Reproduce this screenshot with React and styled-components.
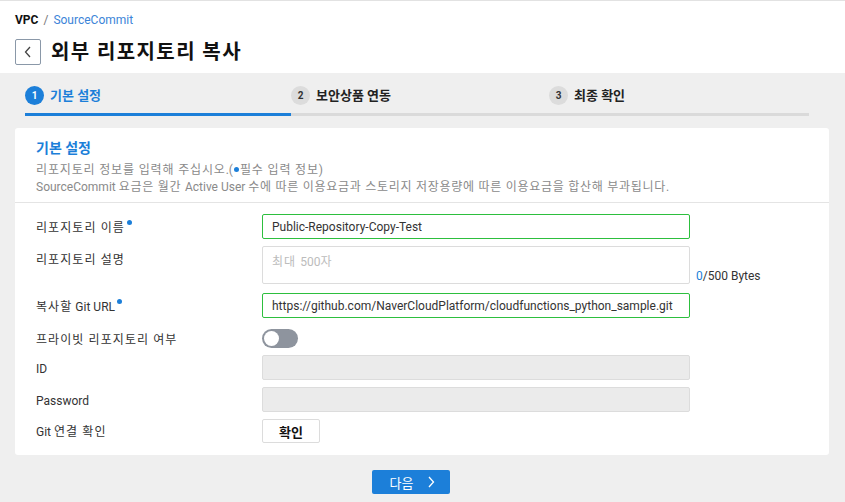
import React from 'react'
import styled, { createGlobalStyle } from 'styled-components'

const GlobalStyle = createGlobalStyle`
  html, body { margin: 0; padding: 0; background: #efefef; }
  body { font-family: Roboto, "Noto Sans CJK KR", sans-serif; color: #222; }
  * { box-sizing: border-box; }
`

const BLUE = '#1c7fd9'
const GREEN = '#2dbf3e'

// Hangul runs render a bit wider in the original font
const Hangul = styled.span`
  letter-spacing: ${({ $ls }) => $ls || '0.07em'};
`

const ko = (text, ls) =>
  text.split(/([\uAC00-\uD7A3][\uAC00-\uD7A3 ]*)/).map((part, i) =>
    /[\uAC00-\uD7A3]/.test(part) ? <Hangul key={i} $ls={ls}>{part}</Hangul> : part
  )

// Header
const Header = styled.header`
  background: #fff;
  border-top: 1px solid #e2e2e2;
  padding: 11px 15px 8px;
`

const Crumbs = styled.div`
  font-size: 12px;
  line-height: 16px;
  display: flex;
  gap: 5px;
`

const CrumbRoot = styled.span`
  font-weight: bold;
  color: #111;
`

const CrumbSep = styled.span`
  color: #777;
`

const CrumbLink = styled.span`
  color: #3c84d8;
`

const TitleRow = styled.div`
  margin-top: 11px;
  display: flex;
  align-items: center;
  gap: 10px;
`

const BackButton = styled.button`
  width: 26px;
  height: 26px;
  padding: 0;
  border: 1px solid #8a98a8;
  border-radius: 2px;
  background: #fff;
  display: flex;
  align-items: center;
  justify-content: center;
`

const Title = styled.h1`
  margin: 0;
  font-size: 20px;
  font-weight: bold;
  color: #111;
  line-height: 26px;
`

// Steps
const Steps = styled.nav`
  display: flex;
  padding: 13px 36px 0 25px;
`

const Step = styled.div`
  flex: ${({ $w }) => ($w ? `0 0 ${$w}px` : '1')};
  display: flex;
  align-items: center;
  gap: 6px;
  padding-bottom: 8px;
  border-bottom: 3px solid ${({ $active }) => ($active ? BLUE : '#dadada')};
  font-size: 13px;
  font-weight: bold;
  line-height: 18px;
  color: ${({ $active }) => ($active ? BLUE : '#222')};
`

const StepNum = styled.span`
  width: 19px;
  height: 19px;
  border-radius: 50%;
  background: ${({ $active }) => ($active ? BLUE : '#dcdcdc')};
  color: ${({ $active }) => ($active ? '#fff' : '#333')};
  font-size: 10px;
  font-weight: bold;
  display: flex;
  align-items: center;
  justify-content: center;
`

// Card
const Card = styled.section`
  margin: 12px 16px 0 15px;
  background: #fff;
  border-radius: 3px;
  padding-bottom: 12px;
`

const CardHead = styled.div`
  padding: 10px 21px 6px;
  border-bottom: 1px solid #e4e4e4;
`

const CardTitle = styled.h2`
  margin: 0 0 4px;
  font-size: 14px;
  font-weight: bold;
  line-height: 20px;
  color: ${BLUE};
`

const Desc = styled.p`
  margin: 0;
  font-size: 12px;
  line-height: 17px;
  color: #8a8a8a;
`

const Dot = styled.span`
  display: inline-block;
  width: 5px;
  height: 5px;
  border-radius: 50%;
  background: ${BLUE};
  vertical-align: ${({ $sup }) => ($sup ? '7px' : '2px')};
  margin: 0 1px 0 ${({ $sup }) => ($sup ? '2px' : '1px')};
`

const Form = styled.div`
  padding: 11px 0 0 21px;
  display: flex;
  flex-direction: column;
  gap: 7px;
`

const Row = styled.div`
  display: grid;
  grid-template-columns: 226px 428px auto;
  align-items: ${({ $top }) => ($top ? 'start' : 'center')};
  margin-top: ${({ $mt }) => $mt || 0}px;
`

const Label = styled.label`
  font-size: 12px;
  color: #333;
  line-height: 16px;
  padding-top: ${({ $top }) => ($top ? '6px' : '2px')};
`

const Input = styled.div`
  height: 25px;
  border: 1px solid ${({ $ok }) => ($ok ? GREEN : '#dcdcdc')};
  border-radius: 2px;
  background: ${({ $disabled }) => ($disabled ? '#ebebeb' : '#fff')};
  font-size: 12px;
  color: #333;
  padding: 0 9px;
  display: flex;
  align-items: center;
  white-space: nowrap;
  overflow: hidden;
`

const TextArea = styled.div`
  height: 38px;
  border: 1px solid #dcdcdc;
  border-radius: 2px;
  font-size: 12px;
  color: #bcbcbc;
  padding: 5px 9px;
`

const Counter = styled.span`
  align-self: end;
  font-size: 12px;
  color: #333;
  margin: 0 0 0 6px;
  padding-bottom: 1px;
  white-space: nowrap;
`

const CountNum = styled.span`
  color: ${BLUE};
`

const Toggle = styled.span`
  width: 36px;
  height: 19px;
  border-radius: 10px;
  background: #8e949e;
  display: flex;
  align-items: center;
  padding-left: 2px;
  &::before {
    content: '';
    width: 15px;
    height: 15px;
    border-radius: 50%;
    background: #fff;
  }
`

const SmallButton = styled.button`
  width: 58px;
  height: 24px;
  border: 1px solid #dcdcdc;
  border-radius: 2px;
  background: #fff;
  font-family: inherit;
  font-size: 13px;
  font-weight: bold;
  color: #111;
  padding: 0;
`

const Footer = styled.div`
  display: flex;
  justify-content: center;
  padding: 15px 24px 0 0;
`

const NextButton = styled.button`
  width: 78px;
  height: 24px;
  border: none;
  border-radius: 2px;
  background: ${BLUE};
  color: #fff;
  font-family: inherit;
  font-size: 13px;
  display: flex;
  align-items: center;
  justify-content: center;
  gap: 14px;
  padding: 0 0 0 4px;
`

const Chevron = ({ dir = 'right', color = '#fff' }) => (
  <svg width="8" height="12" viewBox="0 0 8 12">
    <path
      d={dir === 'left' ? 'M6 1 L1.5 6 L6 11' : 'M2 1 L6.5 6 L2 11'}
      fill="none"
      stroke={color}
      strokeWidth="1.3"
    />
  </svg>
)

const steps = [
  { n: 1, label: '기본 설정', active: true, w: 266 },
  { n: 2, label: '보안상품 연동', w: 258 },
  { n: 3, label: '최종 확인' }
]

const LS = '0.09em'

export default function App() {
  return (
    <>
      <GlobalStyle />
      <Header>
        <Crumbs>
          <CrumbRoot>VPC</CrumbRoot>
          <CrumbSep>/</CrumbSep>
          <CrumbLink>SourceCommit</CrumbLink>
        </Crumbs>
        <TitleRow>
          <BackButton><Chevron dir="left" color="#444" /></BackButton>
          <Title>{ko('외부 리포지토리 복사', '0.07em')}</Title>
        </TitleRow>
      </Header>

      <Steps>
        {steps.map((s) => (
          <Step key={s.n} $active={s.active} $w={s.w}>
            <StepNum $active={s.active}>{s.n}</StepNum>
            {s.label}
          </Step>
        ))}
      </Steps>

      <Card>
        <CardHead>
          <CardTitle>기본 설정</CardTitle>
          <Desc>{ko('리포지토리 정보를 입력해 주십시오.(', '0.07em')}<Dot />{ko('필수 입력 정보)', '0.07em')}</Desc>
          <Desc>{ko('SourceCommit 요금은 월간 Active User 수에 따른 이용요금과 스토리지 저장용량에 따른 이용요금을 합산해 부과됩니다.', '0.06em')}</Desc>
        </CardHead>
        <Form>
          <Row>
            <Label>{ko('리포지토리 이름', LS)}<Dot $sup /></Label>
            <Input $ok>Public-Repository-Copy-Test</Input>
          </Row>
          <Row $top>
            <Label $top>{ko('리포지토리 설명', LS)}</Label>
            <TextArea>{ko('최대 ', LS)}500{ko('자', LS)}</TextArea>
            <Counter><CountNum>0</CountNum>/500 Bytes</Counter>
          </Row>
          <Row $mt={2}>
            <Label>{ko('복사할', LS)} Git URL<Dot $sup /></Label>
            <Input $ok>https://github.com/NaverCloudPlatform/cloudfunctions_python_sample.git</Input>
          </Row>
          <Row $mt={4}>
            <Label>{ko('프라이빗 리포지토리 여부', LS)}</Label>
            <div><Toggle /></div>
          </Row>
          <Row>
            <Label>ID</Label>
            <Input $disabled />
          </Row>
          <Row>
            <Label>Password</Label>
            <Input $disabled />
          </Row>
          <Row>
            <Label>Git {ko('연결 확인', LS)}</Label>
            <div><SmallButton>확인</SmallButton></div>
          </Row>
        </Form>
      </Card>

      <Footer>
        <NextButton>다음<Chevron /></NextButton>
      </Footer>
    </>
  )
}
